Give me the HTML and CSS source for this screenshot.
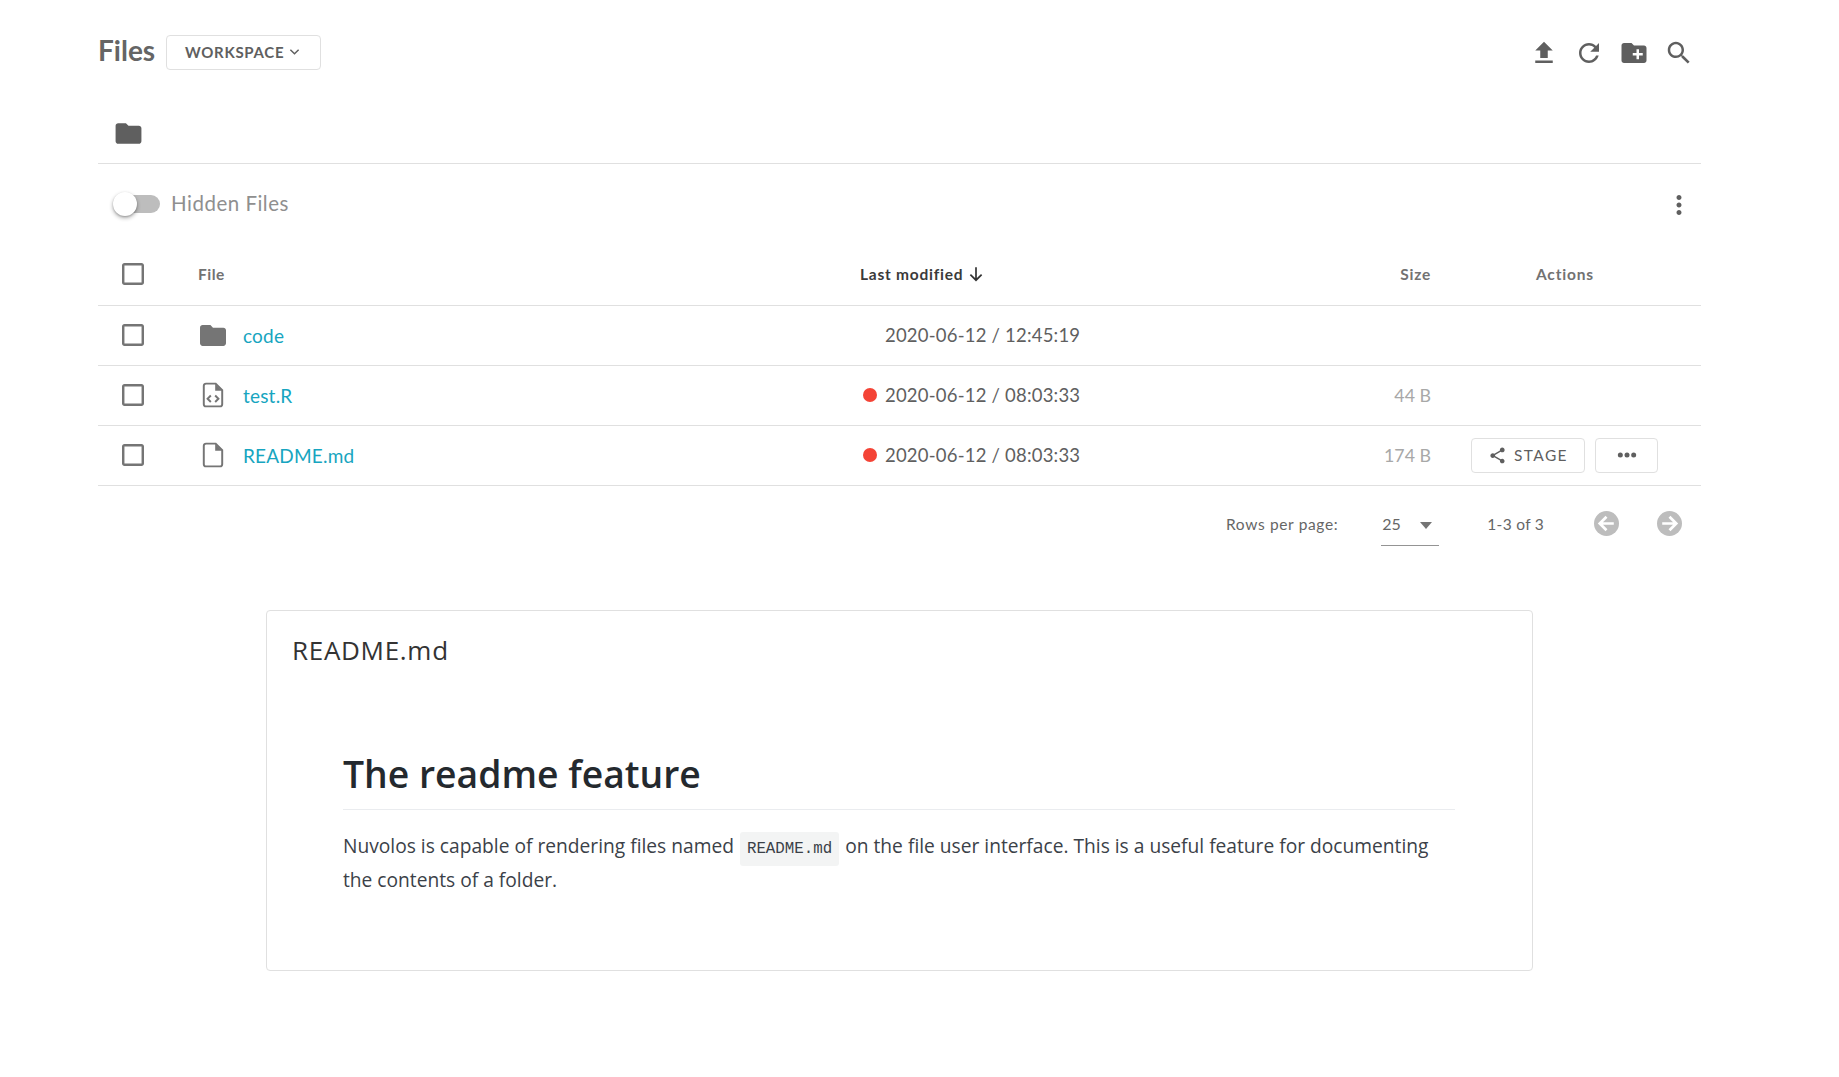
FILE: index.html
```html
<!DOCTYPE html>
<html lang="en">
<head>
<meta charset="utf-8">
<title>Files</title>
<link rel="stylesheet" href="styles.css">
</head>
<body>
<main class="page">
  <header class="topbar">
    <h1 class="title">Files</h1>
    <button class="btn workspace">WORKSPACE
      <svg class="chev" viewBox="0 0 12 8"><path d="M1.5 1.5 6 6l4.500-4.500" /></svg>
    </button>
    <div class="tools">
      <svg class="tool" viewBox="0 0 24 24"><path d="M9 16h6v-6h4l-7-7-7 7h4zm-4 2h14v2H5z"/></svg>
      <svg class="tool" viewBox="0 0 24 24"><path d="M17.650 6.350C16.200 4.900 14.210 4 12 4c-4.420 0-7.990 3.580-7.990 8s3.570 8 7.990 8c3.730 0 6.840-2.550 7.730-6h-2.080c-.82 2.330-3.040 4-5.650 4-3.310 0-6-2.690-6-6s2.690-6 6-6c1.660 0 3.140.69 4.220 1.780L13 11h7V4l-2.350 2.350z"/></svg>
      <svg class="tool" viewBox="0 0 24 24"><path d="M20 6h-8l-2-2H4c-1.110 0-1.990.89-1.990 2L2 18c0 1.110.89 2 2 2h16c1.110 0 2-.89 2-2V8c0-1.110-.89-2-2-2zm-1 8h-3v3h-2v-3h-3v-2h3V9h2v3h3v2z"/></svg>
      <svg class="tool" viewBox="0 0 24 24"><path d="M15.500 14h-.79l-.28-.27C15.410 12.590 16 11.110 16 9.500 16 5.910 13.090 3 9.500 3S3 5.910 3 9.500 5.910 16 9.500 16c1.610 0 3.090-.59 4.230-1.570l.27.28v.79l5 4.990L20.490 19l-4.990-5zm-6 0C7.010 14 5 11.990 5 9.500S7.010 5 9.500 5 14 7.010 14 9.500 11.990 14 9.500 14z"/></svg>
    </div>
  </header>

  <nav class="crumbs">
    <svg class="crumb-folder" viewBox="0 0 24 24"><path d="M10 4H4c-1.100 0-1.990.9-1.990 2L2 18c0 1.100.9 2 2 2h16c1.100 0 2-.9 2-2V8c0-1.100-.9-2-2-2h-8l-2-2z"/></svg>
  </nav>

  <div class="filter">
    <span class="switch"><span class="thumb"></span></span>
    <span class="filter-label">Hidden Files</span>
    <svg class="kebab" viewBox="0 0 24 24"><path d="M12 8c1.100 0 2-.9 2-2s-.9-2-2-2-2 .9-2 2 .9 2 2 2zm0 2c-1.100 0-2 .9-2 2s.9 2 2 2 2-.9 2-2-.9-2-2-2zm0 6c-1.100 0-2 .9-2 2s.9 2 2 2 2-.9 2-2-.9-2-2-2z"/></svg>
  </div>

  <section class="table">
    <div class="row head">
      <div class="c-check"><svg class="check" viewBox="3 3 18 18"><path d="M19 5v14H5V5h14m0-2H5c-1.100 0-2 .9-2 2v14c0 1.100.9 2 2 2h14c1.100 0 2-.9 2-2V5c0-1.100-.9-2-2-2z"/></svg></div>
      <div class="c-file">File</div>
      <div class="c-date sorted">Last modified
        <svg class="sort" viewBox="0 0 16 16"><path d="M8 2v11.500M3 8.500l5 5 5-5"/></svg>
      </div>
      <div class="c-size">Size</div>
      <div class="c-actions actions-head">Actions</div>
    </div>

    <div class="row body">
      <div class="c-check"><svg class="check" viewBox="3 3 18 18"><path d="M19 5v14H5V5h14m0-2H5c-1.100 0-2 .9-2 2v14c0 1.100.9 2 2 2h14c1.100 0 2-.9 2-2V5c0-1.100-.9-2-2-2z"/></svg></div>
      <div class="c-file">
        <svg class="type folder" viewBox="2 4 20 16"><path d="M10 4H4c-1.100 0-1.990.9-1.990 2L2 18c0 1.100.9 2 2 2h16c1.100 0 2-.9 2-2V8c0-1.100-.9-2-2-2h-8l-2-2z"/></svg>
        <a class="link">code</a>
      </div>
      <div class="c-date"><span class="dot none"></span>2020-06-12 / 12:45:19</div>
      <div class="c-size"></div>
      <div class="c-actions"></div>
    </div>

    <div class="row body">
      <div class="c-check"><svg class="check" viewBox="3 3 18 18"><path d="M19 5v14H5V5h14m0-2H5c-1.100 0-2 .9-2 2v14c0 1.100.9 2 2 2h14c1.100 0 2-.9 2-2V5c0-1.100-.9-2-2-2z"/></svg></div>
      <div class="c-file">
        <svg class="type doc" viewBox="0 0 20 24"><path class="sheet" d="M12.500 1.500H3.500a2 2 0 0 0-2 2v17a2 2 0 0 0 2 2h13a2 2 0 0 0 2-2V7.500z"/><path class="fold" d="M12 1.500v6.500h6.500z"/><path class="sheet" d="M8 12.500 5 15.500l3 3M12 12.500l3 3-3 3"/></svg>
        <a class="link">test.R</a>
      </div>
      <div class="c-date"><span class="dot"></span>2020-06-12 / 08:03:33</div>
      <div class="c-size">44 B</div>
      <div class="c-actions"></div>
    </div>

    <div class="row body">
      <div class="c-check"><svg class="check" viewBox="3 3 18 18"><path d="M19 5v14H5V5h14m0-2H5c-1.100 0-2 .9-2 2v14c0 1.100.9 2 2 2h14c1.100 0 2-.9 2-2V5c0-1.100-.9-2-2-2z"/></svg></div>
      <div class="c-file">
        <svg class="type doc" viewBox="0 0 20 24"><path class="sheet" d="M12.500 1.500H3.500a2 2 0 0 0-2 2v17a2 2 0 0 0 2 2h13a2 2 0 0 0 2-2V7.500z"/><path class="fold" d="M12 1.500v6.500h6.500z"/></svg>
        <a class="link">README.md</a>
      </div>
      <div class="c-date"><span class="dot"></span>2020-06-12 / 08:03:33</div>
      <div class="c-size">174 B</div>
      <div class="c-actions">
        <button class="btn stage">
          <svg class="share" viewBox="0 0 24 24"><path d="M18 16.080c-.76 0-1.440.3-1.960.77L8.910 12.700c.05-.23.09-.46.09-.7s-.04-.47-.09-.7l7.050-4.110c.54.5 1.250.81 2.040.81 1.660 0 3-1.340 3-3s-1.340-3-3-3-3 1.340-3 3c0 .24.04.47.09.7L8.040 9.810C7.500 9.310 6.790 9 6 9c-1.660 0-3 1.340-3 3s1.340 3 3 3c.79 0 1.500-.31 2.040-.81l7.120 4.160c-.05.21-.08.43-.08.65 0 1.610 1.310 2.920 2.920 2.920 1.610 0 2.920-1.310 2.920-2.920s-1.310-2.920-2.920-2.920z"/></svg>
          STAGE
        </button>
        <button class="btn more">
          <svg class="dots" viewBox="0 0 24 24"><circle cx="4" cy="12" r="3"/><circle cx="12" cy="12" r="3"/><circle cx="20" cy="12" r="3"/></svg>
        </button>
      </div>
    </div>
  </section>

  <div class="pager">
    <span class="pager-label">Rows per page:</span>
    <span class="select">25<span class="caret"></span></span>
    <span class="range">1-3 of 3</span>
    <svg class="nav first" viewBox="0 0 24 24"><circle cx="12" cy="12" r="12"/><path d="M19 12H6M12 5.500 5.500 12l6.500 6.500"/></svg>
    <svg class="nav" viewBox="0 0 24 24"><circle cx="12" cy="12" r="12"/><path d="M5 12h13M12 5.500l6.500 6.500-6.500 6.500"/></svg>
  </div>

  <article class="card">
    <h2 class="card-title">README.md</h2>
    <div class="markdown">
      <h1 class="md-h1">The readme feature</h1>
      <p class="md-p">Nuvolos is capable of rendering files named <code class="md-code">README.md</code> on the file user interface. This is a useful feature for documenting the contents of a folder.</p>
    </div>
  </article>
</main>
</body>
</html>
```

FILE: styles.css
```css
* { box-sizing: border-box; }
html, body { margin: 0; background: #fff; }
body {
  font-family: "Lato", "Open Sans", sans-serif;
  color: #5f5f5f;
  height: 1077px;
  overflow: hidden;
}
svg { display: block; fill: currentColor; }
button { font-family: inherit; cursor: pointer; }

.page { width: 1603px; margin-left: 98px; }

.topbar { display: flex; align-items: center; height: 104px; }
.title { margin: 0 11px 5px 0; font-size: 28px; font-weight: 700; color: #656565; }
.btn {
  display: inline-flex; align-items: center; justify-content: center;
  background: #fff; border: 1px solid #e0e0e0; border-radius: 4px;
  color: #5f5f5f; height: 35px; padding: 0;
}
.workspace { width: 155px; font-size: 15px; font-weight: 700; letter-spacing: .7px; gap: 5px; padding-right: 2px; }
.chev { width: 11px; height: 8px; fill: none; stroke: #5f5f5f; stroke-width: 1.600; }
.tools { margin-left: auto; display: flex; gap: 15px; margin: 2px 7px 0 auto; }
.tool { width: 30px; height: 30px; }

.crumbs { height: 60px; border-bottom: 1px solid #e0e0e0; padding: 0 0 1px 15px; display: flex; align-items: center; }
.crumb-folder { width: 31px; height: 31px; }

.filter { display: flex; align-items: center; height: 80px; padding: 0 7px 0 19px; }
.switch { position: relative; width: 43px; height: 18px; border-radius: 9px; background: #bdbdbd; margin-right: 11px; }
.thumb {
  position: absolute; left: -4px; top: -3px; width: 24px; height: 24px; border-radius: 50%;
  background: #fff; box-shadow: 0 2px 4px rgba(0,0,0,.3), 0 1px 2px rgba(0,0,0,.2);
}
.filter-label { font-size: 20.500px; letter-spacing: .5px; color: #8f8f8f; margin-bottom: 2px; }
.kebab { margin-left: auto; width: 30px; height: 30px; margin-top: 2px; }

.row { display: grid; grid-template-columns: 100px 662px 490px 81px 270px; align-items: center; border-bottom: 1px solid #e0e0e0; }
.head { height: 61.500px; font-size: 15.500px; font-weight: 700; color: #727272; letter-spacing: .5px; }
.body { height: 60.200px; font-size: 18.500px; letter-spacing: .2px; color: #5f5f5f; }
.c-check { padding-left: 24px; }
.check { width: 22px; height: 22px; color: #757575; }
.c-file { display: flex; align-items: center; }
.type { width: 26px; margin: 0 17px 0 2px; color: #757575; }
.folder { height: 21px; }
.doc { height: 26px; fill: none; stroke: #757575; stroke-width: 1.800; }
.doc .fold { fill: #757575; stroke: none; }
.link { color: #17a5c0; font-size: 19px; }
.c-date { display: flex; align-items: center; }
.sorted { color: #3a3a3a; gap: 4px; letter-spacing: .75px; }
.sort { width: 18px; height: 20px; fill: none; stroke: #333; stroke-width: 1.500; }
.dot { width: 14px; height: 14px; border-radius: 50%; background: #f44336; margin: 0 8px 0 3px; }
.dot.none { background: transparent; }
.c-size { text-align: right; color: #a8a8a8; letter-spacing: 0; font-size: 17.800px; }
.head .c-size { color: #727272; letter-spacing: .8px; font-size: 15.500px; }
.c-actions { display: flex; align-items: center; padding-left: 40px; gap: 10px; }
.actions-head { padding-left: 105px; letter-spacing: .8px; }
.stage { width: 114px; gap: 7px; font-size: 15.500px; letter-spacing: 1.400px; }
.share { width: 19px; height: 19px; }
.more { width: 63px; }
.dots { width: 20px; height: 20px; }

.pager { display: flex; align-items: center; height: 76px; font-size: 15.500px; color: #666; padding-bottom: 1px; }
.pager-label { margin-left: 1128px; letter-spacing: .65px; }
.select { position: relative; display: flex; align-items: center; width: 58px; height: 44px; margin-left: 43px; border-bottom: 1px solid #949494; font-size: 16px; padding-left: 1px; }
.caret { margin-left: auto; margin-right: 7px; margin-top: 4px; border: 6px solid transparent; border-top: 7px solid #757575; border-bottom: 0; }
.range { margin-left: 48px; letter-spacing: .3px; }
.nav { width: 25px; height: 25px; fill: #bdbdbd; margin-left: 38px; }
.nav.first { margin-left: 50px; }
.nav path { fill: none; stroke: #fff; stroke-width: 2.600; }

.card {
  width: 1267px; height: 361px; margin: 48px 0 0 168px;
  border: 1px solid #e0e0e0; border-radius: 4px; padding: 0 25px;
  font-family: "Open Sans", sans-serif;
}
.card-title { margin: 22px 0 0; font-size: 26px; letter-spacing: .7px; line-height: 34px; font-weight: 400; color: #333; }
.markdown { margin: 82px 52px 0 51px; color: #24292e; }
.md-h1 { margin: 0; font-size: 37.300px; line-height: 50px; font-weight: 600; padding-bottom: 10px; border-bottom: 1px solid #eaecef; }
.md-p { margin: 19px 0 0; font-size: 19.200px; line-height: 34px; color: #3b4148; }
.md-code {
  font-family: "Liberation Mono", monospace; font-size: 15.800px; line-height: 1;
  background: #f3f4f4; border-radius: 3px; padding: 8px 7px; margin: 0 1px;
}
```
